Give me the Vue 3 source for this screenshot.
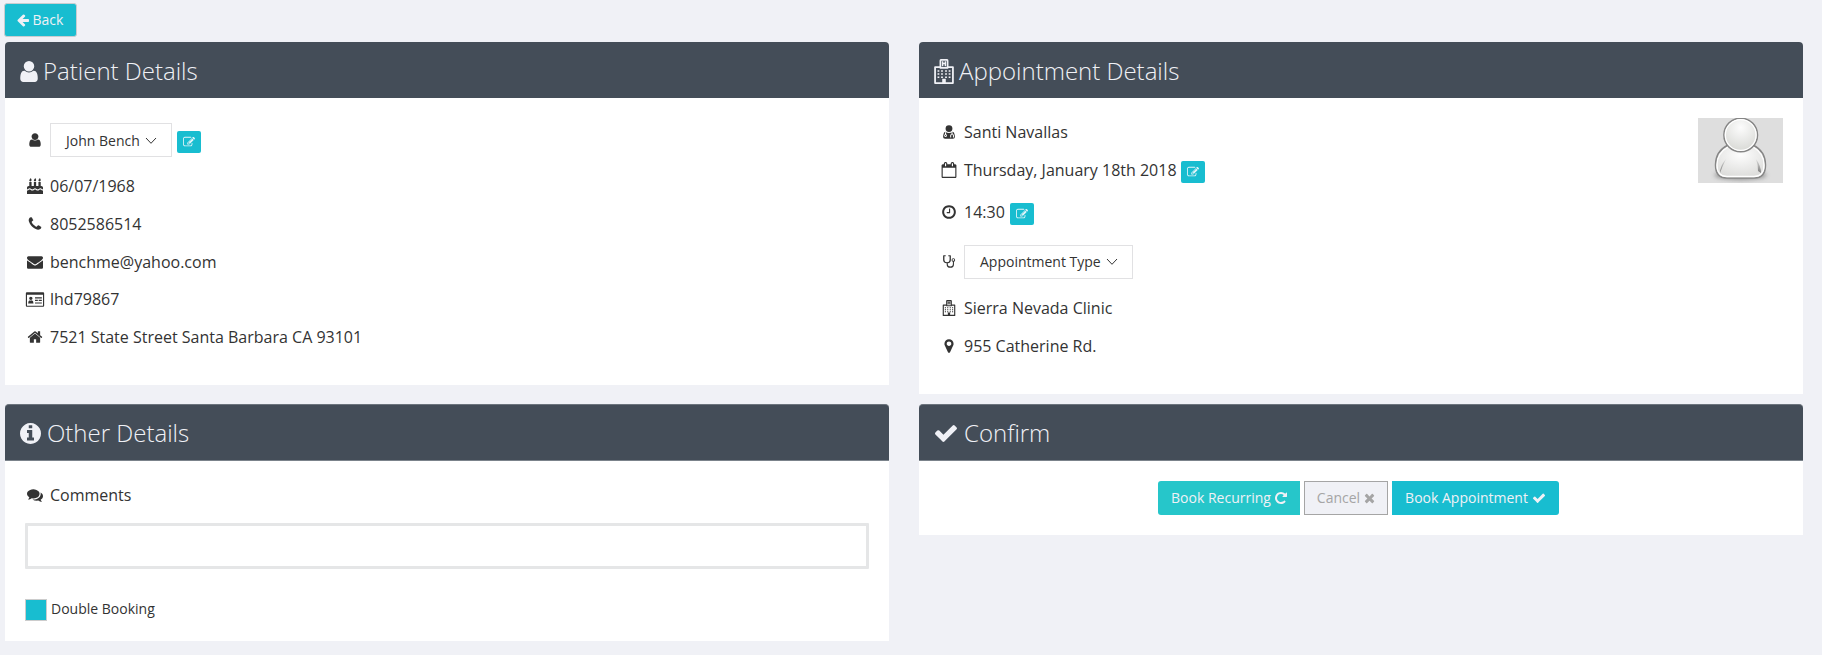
<script setup>
import { h } from 'vue'

const userPath = 'M1536 1399q0 109-62.5 187t-150.5 78h-854q-88 0-150.5-78t-62.5-187q0-85 8.5-160.5t31.5-152 58.5-131 94-89 134.5-34.5q131 128 313 128t313-128q76 0 134.5 34.5t94 89 58.5 131 31.5 152 8.5 160.5zm-256-887q0 159-112.5 271.5t-271.5 112.5-271.5-112.5-112.5-271.5 112.5-271.5 271.5-112.5 271.5 112.5 112.5 271.5z'
const flame = 'q0 77-36 118.5t-92 41.5q-53 0-90.5-37.5t-37.5-90.5q0-29 9.5-51t23.5-34 31-28 31-31.5 23.5-44.5 9.5-67q38 0 83 74t45 150z'
const windows = [800, 1024, 1248].flatMap((y) => [432, 688, 976, 1232].map((x) => `M${x} ${y}h128v112h-128z`)).join('')

const icons = {
  user: userPath,
  back: 'M1664 896v128q0 53-32.5 90.5t-84.5 37.5h-704l293 294q38 36 38 90t-38 90l-75 76q-37 37-90 37-52 0-91-37l-651-652q-37-37-37-90 0-52 37-91l651-650q38-38 91-38 52 0 90 38l75 74q38 38 38 91t-38 91l-293 293h704q52 0 84.5 37.5t32.5 90.5z',
  info: 'M1152 1376v-160q0-14-9-23t-23-9h-96v-512q0-14-9-23t-23-9h-320q-14 0-23 9t-9 23v160q0 14 9 23t23 9h96v320h-96q-14 0-23 9t-9 23v160q0 14 9 23t23 9h448q14 0 23-9t9-23zm-128-896v-160q0-14-9-23t-23-9h-192q-14 0-23 9t-9 23v160q0 14 9 23t23 9h192q14 0 23-9t9-23zm640 416q0 209-103 385.5t-279.5 279.5-385.5 103-385.5-103-279.5-279.5-103-385.5 103-385.5 279.5-279.5 385.5-103 385.5 103 279.5 279.5 103 385.5z',
  check: 'M1671 566q0 40-28 68l-724 724-136 136q-28 28-68 28t-68-28l-136-136-362-362q-28-28-28-68t28-68l136-136q28-28 68-28t68 28l294 295 656-657q28-28 68-28t68 28l136 136q28 28 28 68z',
  times: 'M1490 1322q0 40-28 68l-136 136q-28 28-68 28t-68-28l-294-294-294 294q-28 28-68 28t-68-28l-136-136q-28-28-28-68t28-68l294-294-294-294q-28-28-28-68t28-68l136-136q28-28 68-28t68 28l294 294 294-294q28-28 68-28t68 28l136 136q28 28 28 68t-28 68l-294 294 294 294q28 28 28 68z',
  repeat: 'M1664 256v448q0 26-19 45t-45 19h-448q-42 0-59-40-17-39 14-69l138-138q-148-137-349-137-104 0-198.5 40.5t-163.5 109.5-109.5 163.5-40.5 198.5 40.5 198.5 109.5 163.5 163.5 109.5 198.5 40.5q119 0 225-52t179-147q7-10 23-12 15 0 25 9l137 138q9 8 9.5 20.5t-7.5 22.5q-109 132-264 204.5t-327 72.5q-156 0-298-61t-245-164-164-245-61-298 61-298 164-245 245-164 298-61q147 0 284.5 55.5t244.5 156.5l130-129q29-31 70-14 39 17 39 59z',
  phone: 'M1600 1240q0 27-10 70.5t-21 68.5q-21 50-122 106-94 51-186 51-27 0-53-3.5t-57.5-12.5-47-14.5-55.5-20.5-49-18q-98-35-175-83-127-79-264-216t-216-264q-48-77-83-175-3-9-18-49t-20.5-55.5-14.5-47-12.5-57.5-3.5-53q0-92 51-186 56-101 106-122 25-11 68.5-21t70.5-10q14 0 21 3 18 6 53 76 11 19 30 54t35 63.5 31 53.5q3 4 17.5 25t21.5 35.5 7 28.5q0 20-28.5 50t-62 55-62 53-28.5 46q0 9 5 22.5t8.5 20.5 14 24 11.5 19q76 137 174 235t235 174q2 1 19 11.5t24 14 20.5 8.5 22.5 5q18 0 46-28.5t53-62 55-62 50-28.5q14 0 28.5 7t35.5 21.5 25 17.5q25 15 53.5 31t63.5 35 54 30q70 35 76 53 3 7 3 21z',
  mail: 'M1792 710v794q0 66-47 113t-113 47h-1472q-66 0-113-47t-47-113v-794q44 49 101 87 362 246 497 345 57 42 92.5 65.5t94.5 48 110 24.5h2q51 0 110-24.5t94.5-48 92.5-65.5q170-123 498-345 57-39 100-87zm0-294q0 79-49 151t-122 123q-376 261-468 325-10 7-42.5 31t-54 38.5-52 32.5-57.5 27-50 9h-2q-23 0-50-9t-57.5-27-52-32.5-54-38.5-42.5-31q-91-64-262-182.5t-205-142.5q-62-42-117-115.5t-55-136.5q0-78 41.5-130t118.5-52h1472q65 0 112.5 47t47.5 113z',
  home: 'M1472 992v480q0 26-19 45t-45 19h-384v-384h-256v384h-384q-26 0-45-19t-19-45v-480q0-1 .5-3t.5-3l575-474 575 474q1 2 1 6zm223-69l-62 74q-8 9-21 11h-3q-13 0-21-7l-692-577-692 577q-12 8-24 7-13-2-21-11l-62-74q-8-10-7-23.5t11-21.5l719-599q32-26 76-26t76 26l244 204v-195q0-14 9-23t23-9h192q14 0 23 9t9 23v408l219 182q10 8 11 21.5t-7 23.5z',
  cake: 'M1792 1408v384h-1792v-384q45 0 85-14t59-27.5 47-37.5q30-27 51.5-38t56.5-11q24 0 44 7t31 15 33 27q29 25 47 38t58 27 86 14q45 0 85-14.5t58-27 48-37.5q21-19 32.5-27t31-15 43.5-7q35 0 56.5 11t51.5 38q28 24 47 37.5t59 27.5 85 14 85-14 59-27.5 47-37.5q30-27 51.5-38t56.5-11q34 0 55.5 11t51.5 38q28 24 47 37.5t59 27.5 85 14zm0-320v192q-24 0-44-7t-31-15-33-27q-29-25-47-38t-58-27-85-14q-46 0-86 14t-58 27-47 38q-22 19-33 27t-31 15-44 7q-35 0-56.5-11t-51.5-38q-29-25-47-38t-58-27-86-14q-45 0-85 14.5t-58 27-48 37.5q-21 19-32.5 27t-31 15-43.5 7q-35 0-56.5-11t-51.5-38q-28-24-47-37.5t-59-27.5-85-14q-46 0-86 14t-58 27-47 38q-22 19-33 27t-31 15-44 7v-192q0-80 56-136t136-56h64v-448h256v448h256v-448h256v448h256v-448h256v448h64q80 0 136 56t56 136z' + ['M512 224', 'M1024 224', 'M1536 224'].map((m) => m + flame).join(''),
  pin: 'M1152 640q0-106-75-181t-181-75-181 75-75 181 75 181 181 75 181-75 75-181zm256 0q0 109-33 179l-364 774q-16 33-47.5 52t-67.5 19-67.5-19-46.5-52l-365-774q-33-70-33-179 0-212 150-362t362-150 362 150 150 362z',
  clock: 'M1024 544v448q0 14-9 23t-23 9h-320q-14 0-23-9t-9-23v-64q0-14 9-23t23-9h224v-352q0-14 9-23t23-9h64q14 0 23 9t9 23zm416 352q0-148-73-273t-198-198-273-73-273 73-198 198-73 273 73 273 198 198 273 73 273-73 198-198 73-273zm224 0q0 209-103 385.5t-279.5 279.5-385.5 103-385.5-103-279.5-279.5-103-385.5 103-385.5 279.5-279.5 385.5-103 385.5 103 279.5 279.5 103 385.5z',
  edit: 'M888 1184l116-116-152-152-116 116v56h96v96h56zm440-720q-16-16-33 1l-350 350q-17 17-1 33t33-1l350-350q17-17 1-33zm80 594v190q0 119-84.5 203.5t-203.5 84.5h-832q-119 0-203.5-84.5t-84.5-203.5v-832q0-119 84.5-203.5t203.5-84.5h832q63 0 117 25 15 7 18 23 3 17-9 29l-49 49q-14 14-32 8-23-6-45-6h-832q-66 0-113 47t-47 113v832q0 66 47 113t113 47h832q66 0 113-47t47-113v-126q0-13 9-22l64-64q15-15 35-7t20 29zm-96-738l288 288-672 672h-288v-288zm444 132l-92 92-288-288 92-92q28-28 68-28t68 28l152 152q28 28 28 68t-28 68z',
  comments: 'M1408 768q0 139-94 257t-256.5 186.5-353.5 68.5q-86 0-176-16-124 88-278 128-36 9-86 16h-3q-11 0-20.5-8t-11.5-21q-1-3-1-6.5t.5-6.5 2-6l2.5-5 3.5-5.5 4-5 4.5-5 4-4.5q5-6 23-25t26-29.5 22.5-29 25-38.5 20.5-44q-124-72-195-177t-71-224q0-139 94-257t256.5-186.5 353.5-68.5 353.5 68.5 256.5 186.5 94 257zm384 256q0 120-71 224.5t-195 176.5q10 24 20.5 44t25 38.5 22.5 29 26 29.5 23 25q1 1 4 4.5t4.5 5 4 5 3.5 5.5l2.5 5 2 6 .5 6.5-1 6.5q-3 14-13 22t-22 7q-50-7-86-16-154-40-278-128-90 16-176 16-271 0-472-132 58 4 88 4 161 0 309-45t264-129q125-92 192-212t67-254q0-77-23-152 129 71 204 178t75 230z',
  hospital: 'M192 576q0-64 64-64h320v-384q0-128 96-128h448q96 0 96 128v384h320q64 0 64 64v1152q0 64-64 64h-1280q-64 0-64-64zM320 640v1024h448v-256h256v256h448v-1024h-256q0 64-96 64h-448q-96 0-96-64zM704 128v448h384v-448zM752 160h96v112h96v-112h96v352h-96v-144h-96v144h-96z' + windows,
  calendar: 'M128 1664h1408v-1024h-1408zM512 448v-288q0-32-32-32h-64q-32 0-32 32v288q0 32 32 32h64q32 0 32-32zM1280 448v-288q0-32-32-32h-64q-32 0-32 32v288q0 32 32 32h64q32 0 32-32zM1664 384v1280q0 52-38 90t-90 38h-1408q-52 0-90-38t-38-90v-1280q0-52 38-90t90-38h128v-96q0-66 47-113t113-47h64q66 0 113 47t47 113v96h384v-96q0-66 47-113t113-47h64q66 0 113 47t47 113v96h128q52 0 90 38t38 90z',
  card: 'M-128 256q0-110 110-110h1828q110 0 110 110v1408q0 110-110 110h-1828q-110 0-110-110zM0 420v1222h1792v-1222zM128 1408q0-330 190-370q100 80 220 0q190 40 190 370zM240 820a190 190 0 1 0 380 0a190 190 0 1 0-380 0zM896 704h768v128h-768zM896 992h320v128h-320zM1312 992h352v128h-352zM896 1280h768v128h-768z',
  doctor: 'M512 512a384 384 0 1 0 768 0a384 384 0 1 0-768 0zM500 880q180 140 396 140t396-140q190 20 244 340 20 150 20 240 0 204-220 204h-880q-220 0-220-204 0-90 20-240 54-320 244-340zM450 910v250a150 150 0 1 0 120 0v-250zM450 1300a60 60 0 1 0 120 0a60 60 0 1 0-120 0zM1180 910h120v170q150 30 150 220v200h-110v-180q0-150-100-150t-100 150v180h-110v-200q0-190 150-220z',
  stethoscope: 'M300 128h180q64 0 64 64t-64 64h-96v416q0 256 288 256t288-256v-416h-96q-64 0-64-64t64-64h180q64 0 64 64v480q0 320-352 370v110q0 256 288 256t288-256v-280q-150-60-150-210q0-200 200-200t200 200q0 150-130 210v290q0 384-408 384t-408-384v-120q-400-50-400-370v-480q0-64 64-64zM1286 662a96 96 0 1 0 192 0a96 96 0 1 0-192 0z',
}

const Icon = (props) =>
  h('svg', { viewBox: props.box || '0 0 1792 1792', fill: 'currentColor', 'aria-hidden': 'true' }, [
    h('path', { d: icons[props.name], 'fill-rule': props.name === 'calendar' || props.name === 'user' ? 'nonzero' : 'evenodd' }),
  ])
Icon.props = ['name', 'box']

const patientRows = [
  { icon: 'cake', text: '06/07/1968' },
  { icon: 'phone', text: '8052586514' },
  { icon: 'mail', text: 'benchme@yahoo.com' },
  { icon: 'card', text: 'lhd79867' },
  { icon: 'home', text: '7521 State Street Santa Barbara CA 93101' },
]
</script>

<template>
  <main class="page">
    <button class="btn back"><Icon name="back" class="bi" />Back</button>

    <div class="columns top">
      <section class="panel patient">
        <h2><Icon name="user" box="256 128 1280 1536" class="h-user" />Patient Details</h2>
        <div class="body">
          <div class="row row-select">
            <Icon name="user" class="ri" />
            <button class="select">John Bench
              <svg class="chev" viewBox="0 0 12 8"><path d="M1 1l5 5.3L11 1" /></svg>
            </button>
            <button class="edit"><Icon name="edit" /></button>
          </div>
          <div v-for="r in patientRows" :key="r.icon" class="row" :class="'row-' + r.icon">
            <Icon :name="r.icon" class="ri" /><span>{{ r.text }}</span>
          </div>
        </div>
      </section>

      <section class="panel appointment">
        <h2><Icon name="hospital" box="192 0 1408 1792" class="h-hospital" />Appointment Details</h2>
        <div class="body split">
          <div>
            <div class="row"><Icon name="doctor" class="ri" /><span>Santi Navallas</span></div>
            <div class="row"><Icon name="calendar" box="-64 0 1792 1792" class="ri" /><span>Thursday, January 18th 2018</span><button class="edit low"><Icon name="edit" /></button></div>
            <div class="row row-time"><Icon name="clock" class="ri" /><span>14:30</span><button class="edit"><Icon name="edit" /></button></div>
            <div class="row row-type">
              <Icon name="stethoscope" class="ri" />
              <button class="select wide">Appointment Type
                <svg class="chev" viewBox="0 0 12 8"><path d="M1 1l5 5.3L11 1" /></svg>
              </button>
            </div>
            <div class="row"><Icon name="hospital" class="ri" /><span>Sierra Nevada Clinic</span></div>
            <div class="row"><Icon name="pin" class="ri" /><span>955 Catherine Rd.</span></div>
          </div>
          <svg class="avatar" viewBox="0 0 85 65">
            <defs>
              <radialGradient id="head" cx=".5" cy=".28" r=".75"><stop offset="0" stop-color="#fcfcfc" /><stop offset="1" stop-color="#d6d7d3" /></radialGradient>
              <radialGradient id="torso" cx=".5" cy=".3" r=".7"><stop offset="0" stop-color="#fdfdfd" /><stop offset="1" stop-color="#dcdcda" /></radialGradient>
              <linearGradient id="fold" x1="0" y1="0" x2="0" y2="1"><stop offset="0" stop-color="#999" stop-opacity=".2" /><stop offset="1" stop-color="#777" /></linearGradient>
              <filter id="soft" x="-30%" y="-60%" width="160%" height="220%"><feGaussianBlur stdDeviation="2" /></filter>
            </defs>
            <rect width="85" height="65" fill="#dedede" />
            <ellipse cx="42.5" cy="57" rx="26" ry="5" fill="#777" opacity=".7" filter="url(#soft)" />
            <path d="M30 27C22 31 17.5 38 17.5 47C17.5 56 22 60 29 60H56C63 60 67.5 56 67.5 47C67.5 38 63 31 55 27Z" fill="url(#torso)" stroke="#868686" stroke-width="1.5" />
            <path d="M30 29C23 33 19 39 19 47C19 55 23 58.5 29 58.5H56C62 58.5 66 55 66 47C66 39 62 33 55 29" fill="none" stroke="#fff" stroke-width="1.3" />
            <path d="M28 41Q22 48 22 55Q25 47 28 41ZM58 41Q63 48 63 55L60 53Q60 46 58 41Z" fill="url(#fold)" />
            <circle cx="42.7" cy="17" r="16.8" fill="url(#head)" stroke="#868686" stroke-width="1.5" />
            <circle cx="42.7" cy="17" r="15.4" fill="none" stroke="#fff" stroke-width="1.3" />
          </svg>
        </div>
      </section>
    </div>

    <div class="columns">
      <section class="panel other">
        <h2 class="edged"><Icon name="info" box="128 128 1536 1536" class="h-info" />Other Details</h2>
        <div class="body">
          <div class="row"><Icon name="comments" class="ri" /><span>Comments</span></div>
          <input class="comment" type="text" aria-label="Comments" />
          <div class="booking"><span class="box"></span>Double Booking</div>
        </div>
      </section>

      <section class="panel confirm">
        <h2 class="edged"><Icon name="check" box="121 334 1550 1188" class="h-check" />Confirm</h2>
        <div class="actions">
          <button class="btn recurring">Book Recurring<Icon name="repeat" class="bi" /></button>
          <button class="btn cancel">Cancel<Icon name="times" box="256 0 1280 1792" class="bi narrow" /></button>
          <button class="btn book">Book Appointment<Icon name="check" class="bi" /></button>
        </div>
      </section>
    </div>
  </main>
</template>

<style>
body { background: #f0f1f6; }
</style>

<style scoped>
.page {
  box-sizing: border-box;
  height: 655px;
  padding: 3px 0 0 5px;
  color: #333;
  background: #f0f1f6;
  font-family: "Open Sans", sans-serif;
  font-size: 16px;
  overflow: hidden;
}
.page * { box-sizing: border-box; }
button { font-family: inherit; margin: 0; }
svg { flex: none; display: block; }
.btn {
  display: flex;
  align-items: center;
  justify-content: center;
  gap: 4px;
  height: 34px;
  padding: 0 0 2px;
  border: 0;
  color: #f0f1f6;
  background: #18bdd0;
  font-size: 14px;
  white-space: nowrap;
}
.bi { width: 14px; height: 14px; position: relative; top: 1px; }
.bi.narrow { width: 11px; }
.back { width: 73px; height: 34px; gap: 3px; padding-right: 2px; margin-left: -1px; border: 1px solid #c8cdd0; border-radius: 3px; }
.columns { display: flex; gap: 30px; align-items: flex-start; }
.top { height: 362px; margin-top: 5px; }
.panel { width: 884px; background: #fff; border-radius: 4px 4px 0 0; }
.patient { height: 343px; }
.appointment { height: 352px; }
.other { height: 237px; }
.confirm { height: 131px; }
h2 {
  display: flex;
  align-items: center;
  gap: 6px;
  height: 56px;
  margin: 0;
  padding: 0 15px 0;
  border-radius: 4px 4px 0 0;
  background: #444d58;
  color: #f0f1f6;
  font-size: 24px;
  font-weight: 300;
}
.edged { height: 57px; border-top: 1px solid #6c747d; border-bottom: 1px solid #7b838b; }
.h-user { width: 18px; height: 21px; margin: 2px -1px 0 0; }
.h-hospital { width: 20px; height: 25px; margin: 2px -1px 0 0; }
.h-info { width: 21px; height: 21px; margin-top: 1px; }
.h-check { width: 22px; height: 17px; margin: 2px 1px 0; }
.body { padding: 15px 20px 0; }
.patient .body { padding-top: 19px; }
.row { display: flex; align-items: center; height: 38px; line-height: 22px; white-space: nowrap; }
.row-card { margin-top: -1px; }
.ri { width: 16px; height: 16px; margin: 0 6.7px 0 2.3px; overflow: visible; }
.row-select { height: 50px; padding-bottom: 4px; }
.row-time { height: 46px; }
.row-type { height: 54px; }
.select {
  display: flex;
  align-items: center;
  gap: 5px;
  width: 122px;
  height: 34px;
  padding: 0 0 0 15px;
  border: 1px solid #e1e1e3;
  background: #fff;
  color: #333;
  font-size: 14px;
}
.select.wide { width: 169px; padding-bottom: 1px; }
.chev { width: 12px; height: 8px; margin-top: 1px; fill: none; stroke: #333; stroke-width: 1; }
.edit {
  display: flex;
  align-items: center;
  justify-content: center;
  width: 24px;
  height: 22px;
  margin: 4px 0 0 5px;
  padding: 0;
  border: 0;
  border-radius: 2px;
  background: #18bdd0;
  color: #e3f4f8;
}
.edit.low { margin-left: 4px; }
.edit svg { width: 12px; height: 12px; }
.split { display: flex; justify-content: space-between; }
.avatar { width: 85px; height: 65px; margin-top: 5px; }
.comment { display: block; width: 844px; height: 46px; margin: 9px 0 30px; padding: 0 8px; border: 3px solid #e5e6e7; border-radius: 1px; outline: 0; background: #fff; }
.booking { display: flex; align-items: center; gap: 4px; height: 22px; padding-bottom: 2px; font-size: 14px; line-height: 20px; }
.box { width: 22px; height: 22px; flex: none; position: relative; top: 1px; border: 1px solid #ccc; background: #18bdd0; }
.actions { display: flex; justify-content: center; gap: 4px; padding: 20px 5px 0 0; }
.recurring { width: 142px; gap: 3px; background: #26c6ca; border-radius: 3px 0 0 3px; padding-left: 1px; }
.cancel { width: 84px; border: 1px solid #a5a5a5; background: #f0f1f6; color: #a5a5a5; }
.book { width: 167px; border-radius: 0 3px 3px 0; }
</style>
